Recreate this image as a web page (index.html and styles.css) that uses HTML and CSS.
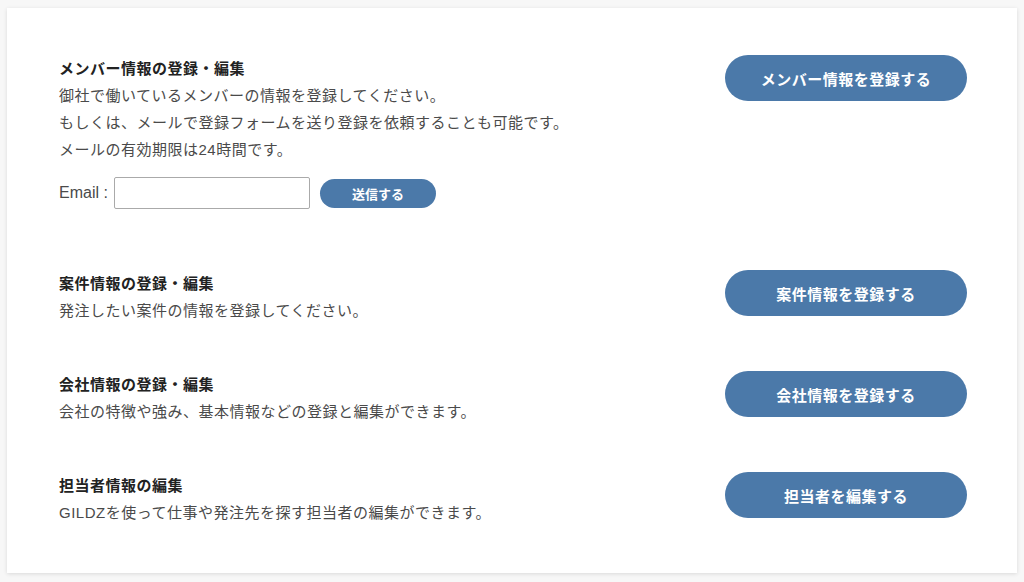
FILE: index.html
```html
<!DOCTYPE html>
<html lang="ja">
<head>
    <meta charset="UTF-8">
    <meta name="viewport" content="width=device-width, initial-scale=1.0">
    <title>登録・編集</title>
    <link rel="stylesheet" href="styles.css">
</head>
<body>
    <div class="panel">
        <!-- メンバー -->
        <div class="row">
            <div class="info">
                <h3 class="title">メンバー情報の登録・編集</h3>
                <p class="desc">御社で働いているメンバーの情報を登録してください。</p>
                <p class="desc">もしくは、メールで登録フォームを送り登録を依頼することも可能です。</p>
                <p class="desc">メールの有効期限は24時間です。</p>
                <form class="mail-form" onsubmit="return false;">
                    <label for="email">Email :</label>
                    <input type="text" id="email">
                    <button class="send-btn">送信する</button>
                </form>
            </div>
            <a class="main-btn" href="#">メンバー情報を登録する</a>
        </div>

        <!-- 案件 -->
        <div class="row">
            <div class="info">
                <h3 class="title">案件情報の登録・編集</h3>
                <p class="desc">発注したい案件の情報を登録してください。</p>
            </div>
            <a class="main-btn" href="#">案件情報を登録する</a>
        </div>

        <!-- 会社 -->
        <div class="row">
            <div class="info">
                <h3 class="title">会社情報の登録・編集</h3>
                <p class="desc">会社の特徴や強み、基本情報などの登録と編集ができます。</p>
            </div>
            <a class="main-btn" href="#">会社情報を登録する</a>
        </div>

        <!-- 担当者 -->
        <div class="row">
            <div class="info">
                <h3 class="title">担当者情報の編集</h3>
                <p class="desc">GILDZを使って仕事や発注先を探す担当者の編集ができます。</p>
            </div>
            <a class="main-btn" href="#">担当者を編集する</a>
        </div>
    </div>
</body>
</html>
```

FILE: styles.css
```css
body {
    font-family: "Liberation Sans", "Noto Sans CJK JP", sans-serif;
    background-color: #f7f7f7;
    margin: 0;
    padding: 8px 7px;
    color: #4a4a4a;
}
.panel {
    background-color: #fff;
    box-shadow: 0 1px 4px rgba(0, 0, 0, 0.12);
    padding: 47px 50px 47px 52px;
    display: flex;
    flex-direction: column;
    gap: 47px;
}
.row {
    display: flex;
    justify-content: space-between;
    align-items: flex-start;
}
.title {
    font-size: 15px;
    font-weight: bold;
    color: #222;
    line-height: 27px;
    letter-spacing: 0.5px;
    margin: 0;
}
.desc {
    font-size: 15px;
    line-height: 27px;
    letter-spacing: 0.5px;
    margin: 0;
}
.mail-form {
    display: flex;
    align-items: center;
    margin: 14px 0 14px;
    font-size: 16px;
}
.mail-form label {
    margin-right: 6px;
}
.mail-form input {
    width: 196px;
    height: 32px;
    box-sizing: border-box;
    border: 1px solid #aaa;
    border-radius: 2px;
    padding: 0 6px;
    margin: 0;
}
.send-btn {
    width: 116px;
    height: 29px;
    margin-left: 10px;
    background-color: #4b79a9;
    color: #fff;
    border: none;
    border-radius: 15px;
    font-family: inherit;
    font-size: 13px;
    font-weight: bold;
    cursor: pointer;
}
.main-btn {
    display: flex;
    align-items: center;
    justify-content: center;
    width: 242px;
    height: 46px;
    margin-top: 0;
    background-color: #4b79a9;
    color: #fff;
    border-radius: 23px;
    font-size: 15px;
    font-weight: bold;
    letter-spacing: 0.5px;
    text-decoration: none;
}
```
